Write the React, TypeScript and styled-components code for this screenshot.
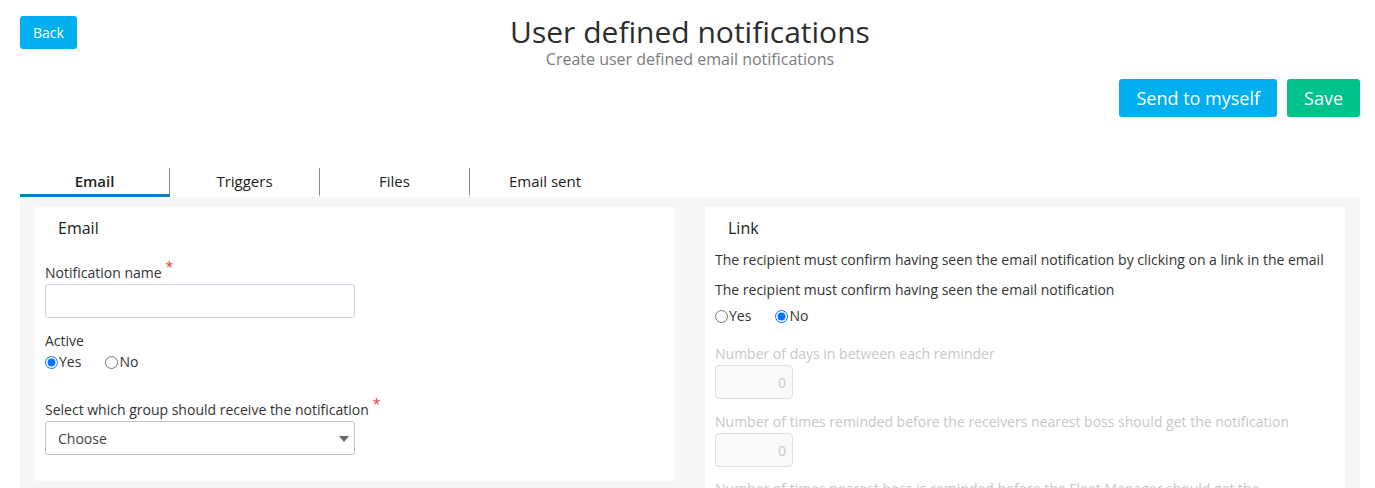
import React from "react";
import styled, { createGlobalStyle } from "styled-components";

const Global = createGlobalStyle`
  * { box-sizing: border-box; }
  body {
    margin: 0;
    font-family: "Open Sans", "Noto Sans", Arial, sans-serif;
    color: #333;
    background: #fff;
  }
`;

const Page = styled.div`
  padding: 16px 15px 0 20px;
`;

const Header = styled.div`
  display: grid;
  grid-template-columns: 1fr auto 1fr;
  align-items: start;
`;

const TitleBlock = styled.div`
  text-align: center;
  margin-top: -1px;
`;

const Title = styled.h1`
  margin: 0;
  font-size: 30px;
  font-weight: 400;
  line-height: 34px;
  color: #2d2d2d;
`;

const Subtitle = styled.div`
  font-size: 16px;
  line-height: 18px;
  margin-top: 1px;
  color: #7b7b7b;
`;

const Button = styled.button<{ $variant?: "blue" | "green"; $size?: "sm" | "lg" }>`
  border: none;
  border-radius: 3px;
  color: #fff;
  font-family: inherit;
  cursor: pointer;
  background: ${(p) => (p.$variant === "green" ? "#00c389" : "#00aff0")};
  font-size: ${(p) => (p.$size === "lg" ? "18px" : "14px")};
  height: ${(p) => (p.$size === "lg" ? "38px" : "33px")};
  padding: ${(p) => (p.$size === "lg" ? "0 17px" : "0 13px")};
  line-height: 1;
`;

const BackWrap = styled.div`
  justify-self: start;
`;

const Actions = styled.div`
  display: flex;
  justify-content: flex-end;
  gap: 10px;
  margin-top: 11px;
`;

const Tabs = styled.div`
  display: flex;
  margin-top: 51px;
`;

const Tab = styled.div<{ $active?: boolean; $last?: boolean }>`
  width: 150px;
  height: 29px;
  display: flex;
  align-items: center;
  justify-content: center;
  font-size: 15px;
  font-weight: ${(p) => (p.$active ? 600 : 400)};
  color: #222;
  border-right: ${(p) => (p.$last ? "none" : "1px solid #8a8a8a")};
  border-bottom: 3px solid ${(p) => (p.$active ? "#0a7cc0" : "transparent")};
`;

const Content = styled.div`
  background: #f7f7f7;
  padding: 10px 15px 8px;
  display: grid;
  grid-template-columns: 1fr 1fr;
  gap: 30px;
  align-items: start;
`;

const Panel = styled.div<{ $tall?: boolean }>`
  background: #fff;
  padding: 10px 10px 26px;
  min-height: ${(p) => (p.$tall ? "300px" : "auto")};
`;

const PanelTitle = styled.div`
  font-size: 16px;
  font-weight: 500;
  line-height: 22px;
  padding: 0 13px;
  color: #222;
`;

const Label = styled.div<{ $disabled?: boolean; $mt?: number }>`
  font-size: 14px;
  line-height: 20px;
  color: ${(p) => (p.$disabled ? "#c8c8c8" : "#333")};
  margin-top: ${(p) => p.$mt ?? 0}px;
  margin-bottom: 1px;
`;

const Req = styled.sup`
  color: #ee3344;
  font-size: 14px;
  margin-left: 4px;
  vertical-align: 6px;
  line-height: 0;
`;

const TextInput = styled.input`
  display: block;
  width: 310px;
  height: 34px;
  border: 1px solid #c7d3e0;
  border-radius: 3px;
  font-family: inherit;
  font-size: 14px;
  padding: 0 12px;
`;

const NumberInput = styled.input`
  display: block;
  width: 78px;
  height: 34px;
  border: 1px solid #e0e0e0;
  border-radius: 4px;
  background: #f9f9f9;
  font-family: inherit;
  font-size: 14px;
  color: #c8c8c8;
  text-align: right;
  padding: 0 6px;
`;

const SelectWrap = styled.div`
  position: relative;
  width: 310px;
  &::after {
    content: "";
    position: absolute;
    right: 6px;
    top: 15px;
    border-left: 5px solid transparent;
    border-right: 5px solid transparent;
    border-top: 6px solid #666;
    pointer-events: none;
  }
`;

const Select = styled.select`
  appearance: none;
  width: 100%;
  height: 34px;
  border: 1px solid #c4c4c4;
  border-radius: 3px;
  background: #fff;
  font-family: inherit;
  font-size: 14px;
  color: #444;
  padding: 0 12px;
`;

const RadioRow = styled.div<{ $mt?: number }>`
  display: flex;
  gap: 24px;
  font-size: 14px;
  line-height: 20px;
  margin-top: ${(p) => p.$mt ?? 0}px;
`;

const RadioLabel = styled.label`
  display: inline-flex;
  align-items: center;
  color: #333;
  input {
    margin: 0 1px 0 0;
    width: 13px;
    height: 13px;
  }
`;

const Text = styled.div<{ $mt?: number }>`
  font-size: 14px;
  line-height: 20px;
  color: #333;
  margin-top: ${(p) => p.$mt ?? 0}px;
`;

export default function App() {
  return (
    <Page>
      <Global />
      <Header>
        <BackWrap>
          <Button>Back</Button>
        </BackWrap>
        <TitleBlock>
          <Title>User defined notifications</Title>
          <Subtitle>Create user defined email notifications</Subtitle>
        </TitleBlock>
        <div />
      </Header>
      <Actions>
        <Button $size="lg">Send to myself</Button>
        <Button $size="lg" $variant="green">Save</Button>
      </Actions>
      <Tabs>
        <Tab $active>Email</Tab>
        <Tab>Triggers</Tab>
        <Tab>Files</Tab>
        <Tab $last>Email sent</Tab>
      </Tabs>
      <Content>
        <Panel>
          <PanelTitle>Email</PanelTitle>
          <Label $mt={24}>
            Notification name<Req>*</Req>
          </Label>
          <TextInput type="text" />
          <Label $mt={13}>Active</Label>
          <RadioRow>
            <RadioLabel>
              <input type="radio" name="active" defaultChecked />
              Yes
            </RadioLabel>
            <RadioLabel>
              <input type="radio" name="active" />
              No
            </RadioLabel>
          </RadioRow>
          <Label $mt={28}>
            Select which group should receive the notification<Req>*</Req>
          </Label>
          <SelectWrap>
            <Select defaultValue="choose">
              <option value="choose">Choose</option>
            </Select>
          </SelectWrap>
        </Panel>
        <Panel $tall>
          <PanelTitle>Link</PanelTitle>
          <Text $mt={11}>
            The recipient must confirm having seen the email notification by clicking on a link in the email
          </Text>
          <Text $mt={10}>The recipient must confirm having seen the email notification</Text>
          <RadioRow $mt={6}>
            <RadioLabel>
              <input type="radio" name="confirm" />
              Yes
            </RadioLabel>
            <RadioLabel>
              <input type="radio" name="confirm" defaultChecked />
              No
            </RadioLabel>
          </RadioRow>
          <Label $disabled $mt={18}>Number of days in between each reminder</Label>
          <NumberInput type="text" disabled defaultValue="0" />
          <Label $disabled $mt={13}>
            Number of times reminded before the receivers nearest boss should get the notification
          </Label>
          <NumberInput type="text" disabled defaultValue="0" />
          <Label $disabled $mt={12}>
            Number of times nearest boss is reminded before the Fleet Manager should get the notification
          </Label>
        </Panel>
      </Content>
    </Page>
  );
}
